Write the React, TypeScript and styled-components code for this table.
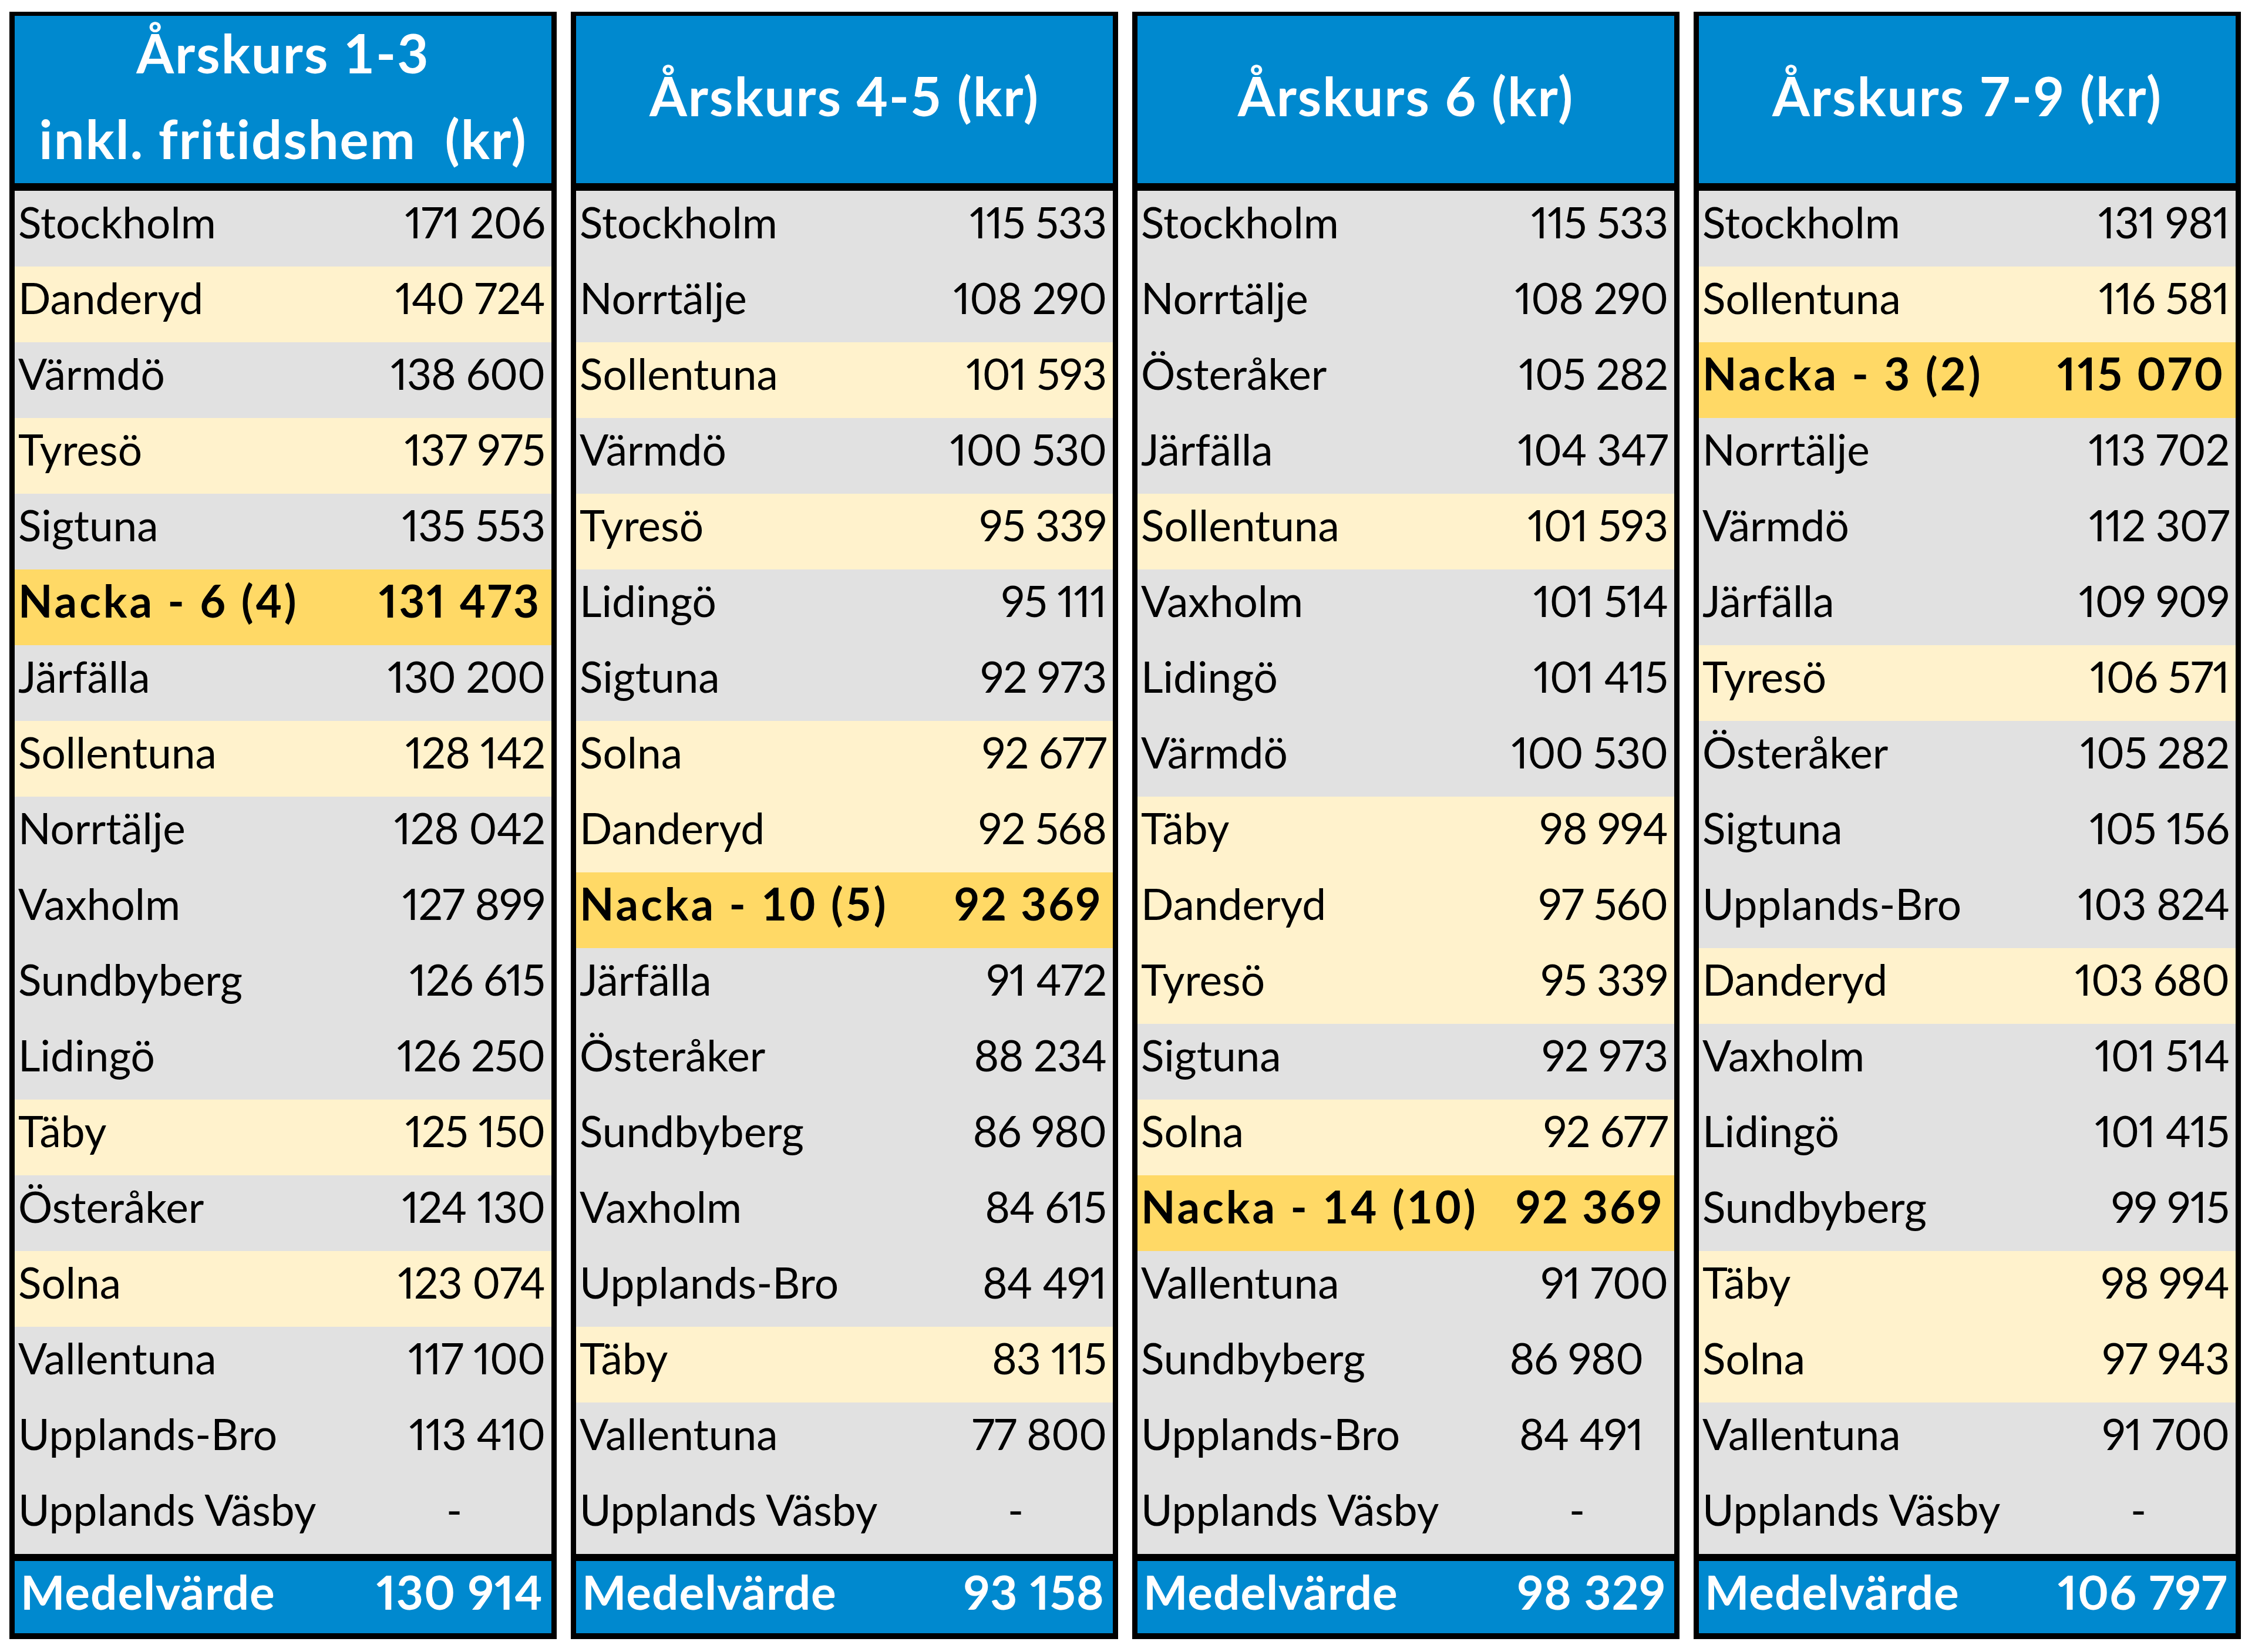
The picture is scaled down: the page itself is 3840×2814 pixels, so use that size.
import React from "react";
import styled, { createGlobalStyle } from "styled-components";

const GlobalStyle = createGlobalStyle`
  html, body {
    margin: 0;
    padding: 0;
    background: #ffffff;
  }
  body {
    font-family: Lato, "Open Sans", "Liberation Sans", sans-serif;
    color: #000000;
  }
`;

type Tone = "gray" | "yellow" | "gold";

type Entry = {
  name: string;
  value: string;
  tone?: Tone;
  inset?: number;
};

type Column = {
  title: string[];
  rows: Entry[];
  mean: string;
};

const DASH_INSET = 142;

const columns: Column[] = [
  {
    title: ["Årskurs 1-3", "inkl. fritidshem\u00a0\u00a0(kr)"],
    mean: "130 914",
    rows: [
      { name: "Stockholm", value: "171 206" },
      { name: "Danderyd", value: "140 724", tone: "yellow" },
      { name: "Värmdö", value: "138 600" },
      { name: "Tyresö", value: "137 975", tone: "yellow" },
      { name: "Sigtuna", value: "135 553" },
      { name: "Nacka - 6 (4)", value: "131 473", tone: "gold" },
      { name: "Järfälla", value: "130 200" },
      { name: "Sollentuna", value: "128 142", tone: "yellow" },
      { name: "Norrtälje", value: "128 042" },
      { name: "Vaxholm", value: "127 899" },
      { name: "Sundbyberg", value: "126 615" },
      { name: "Lidingö", value: "126 250" },
      { name: "Täby", value: "125 150", tone: "yellow" },
      { name: "Österåker", value: "124 130" },
      { name: "Solna", value: "123 074", tone: "yellow" },
      { name: "Vallentuna", value: "117 100" },
      { name: "Upplands-Bro", value: "113 410" },
      { name: "Upplands Väsby", value: "-", inset: DASH_INSET },
    ],
  },
  {
    title: ["Årskurs 4-5 (kr)"],
    mean: "93 158",
    rows: [
      { name: "Stockholm", value: "115 533" },
      { name: "Norrtälje", value: "108 290" },
      { name: "Sollentuna", value: "101 593", tone: "yellow" },
      { name: "Värmdö", value: "100 530" },
      { name: "Tyresö", value: "95 339", tone: "yellow" },
      { name: "Lidingö", value: "95 111" },
      { name: "Sigtuna", value: "92 973" },
      { name: "Solna", value: "92 677", tone: "yellow" },
      { name: "Danderyd", value: "92 568", tone: "yellow" },
      { name: "Nacka - 10 (5)", value: "92 369", tone: "gold" },
      { name: "Järfälla", value: "91 472" },
      { name: "Österåker", value: "88 234" },
      { name: "Sundbyberg", value: "86 980" },
      { name: "Vaxholm", value: "84 615" },
      { name: "Upplands-Bro", value: "84 491" },
      { name: "Täby", value: "83 115", tone: "yellow" },
      { name: "Vallentuna", value: "77 800" },
      { name: "Upplands Väsby", value: "-", inset: DASH_INSET },
    ],
  },
  {
    title: ["Årskurs 6 (kr)"],
    mean: "98 329",
    rows: [
      { name: "Stockholm", value: "115 533" },
      { name: "Norrtälje", value: "108 290" },
      { name: "Österåker", value: "105 282" },
      { name: "Järfälla", value: "104 347" },
      { name: "Sollentuna", value: "101 593", tone: "yellow" },
      { name: "Vaxholm", value: "101 514" },
      { name: "Lidingö", value: "101 415" },
      { name: "Värmdö", value: "100 530" },
      { name: "Täby", value: "98 994", tone: "yellow" },
      { name: "Danderyd", value: "97 560", tone: "yellow" },
      { name: "Tyresö", value: "95 339", tone: "yellow" },
      { name: "Sigtuna", value: "92 973" },
      { name: "Solna", value: "92 677", tone: "yellow" },
      { name: "Nacka - 14 (10)", value: "92 369", tone: "gold" },
      { name: "Vallentuna", value: "91 700" },
      { name: "Sundbyberg", value: "86 980", inset: 42 },
      { name: "Upplands-Bro", value: "84 491", inset: 42 },
      { name: "Upplands Väsby", value: "-", inset: DASH_INSET },
    ],
  },
  {
    title: ["Årskurs 7-9 (kr)"],
    mean: "106 797",
    rows: [
      { name: "Stockholm", value: "131 981" },
      { name: "Sollentuna", value: "116 581", tone: "yellow" },
      { name: "Nacka - 3 (2)", value: "115 070", tone: "gold" },
      { name: "Norrtälje", value: "113 702" },
      { name: "Värmdö", value: "112 307" },
      { name: "Järfälla", value: "109 909" },
      { name: "Tyresö", value: "106 571", tone: "yellow" },
      { name: "Österåker", value: "105 282" },
      { name: "Sigtuna", value: "105 156" },
      { name: "Upplands-Bro", value: "103 824" },
      { name: "Danderyd", value: "103 680", tone: "yellow" },
      { name: "Vaxholm", value: "101 514" },
      { name: "Lidingö", value: "101 415" },
      { name: "Sundbyberg", value: "99 915" },
      { name: "Täby", value: "98 994", tone: "yellow" },
      { name: "Solna", value: "97 943", tone: "yellow" },
      { name: "Vallentuna", value: "91 700" },
      { name: "Upplands Väsby", value: "-", inset: DASH_INSET },
    ],
  },
];

const toneColor: Record<Tone, string> = {
  gray: "#e1e1e1",
  yellow: "#fff2cc",
  gold: "#ffd966",
};

const BLUE = "#0089cf";

const Page = styled.div`
  width: 3840px;
  height: 2814px;
  box-sizing: border-box;
  padding: 20px 24px 0 16px;
  display: flex;
  gap: 24px;
  align-items: flex-start;
`;

const Panel = styled.section`
  width: 932px;
  box-sizing: border-box;
  border: 9px solid #000;
  border-top-width: 7px;
  border-bottom-width: 10px;
  display: flex;
  flex-direction: column;
`;

const Header = styled.header`
  height: 298px;
  box-sizing: border-box;
  background: ${BLUE};
  border-bottom: 13px solid #000;
  color: #fff;
  display: flex;
  flex-direction: column;
  align-items: center;
  justify-content: center;
  padding-bottom: 14px;
  font-weight: 700;
  font-size: 92px;
  letter-spacing: 2px;
  text-align: center;
`;

const HeaderLine = styled.div<{ $tall: boolean }>`
  line-height: ${(p) => (p.$tall ? "146px" : "normal")};
  white-space: nowrap;
`;

const Body = styled.div`
  display: flex;
  flex-direction: column;
`;

const Row = styled.div<{ $tone: Tone }>`
  height: 129px;
  box-sizing: border-box;
  background: ${(p) => toneColor[p.$tone]};
  display: flex;
  align-items: center;
  justify-content: space-between;
  padding: 0 ${(p) => (p.$tone === "gold" ? "18px" : "11px")} 24px 6px;
  font-size: ${(p) => (p.$tone === "gold" ? "76px" : "73px")};
  font-weight: ${(p) => (p.$tone === "gold" ? 700 : 400)};
  white-space: nowrap;
`;

const Name = styled.span<{ $strong: boolean }>`
  letter-spacing: ${(p) => (p.$strong ? "4px" : "0")};
`;

const Amount = styled.span<{ $inset: number; $strong: boolean }>`
  margin-right: ${(p) => p.$inset}px;
  font-variant-numeric: proportional-nums;
  letter-spacing: ${(p) => (p.$strong ? "3px" : "-1px")};
`;

const Footer = styled.footer`
  height: 135px;
  box-sizing: border-box;
  background: ${BLUE};
  border-top: 12px solid #000;
  color: #fff;
  display: flex;
  align-items: center;
  justify-content: space-between;
  padding: 0 14px 20px 10px;
  font-size: 80px;
  font-weight: 700;
  letter-spacing: 1px;
  white-space: nowrap;
`;

const FooterLabel = styled.span``;

const FooterValue = styled.span`
  font-variant-numeric: proportional-nums;
`;

export default function App() {
  return (
    <>
      <GlobalStyle />
      <Page>
        {columns.map((col, i) => (
          <Panel key={i}>
            <Header>
              {col.title.map((t, j) => (
                <HeaderLine key={j} $tall={col.title.length > 1}>
                  {t}
                </HeaderLine>
              ))}
            </Header>
            <Body>
              {col.rows.map((r, k) => {
                const tone = r.tone ?? "gray";
                const strong = tone === "gold";
                return (
                  <Row key={k} $tone={tone}>
                    <Name $strong={strong}>{r.name}</Name>
                    <Amount $inset={r.inset ?? 0} $strong={strong}>
                      {r.value}
                    </Amount>
                  </Row>
                );
              })}
            </Body>
            <Footer>
              <FooterLabel>Medelvärde</FooterLabel>
              <FooterValue>{col.mean}</FooterValue>
            </Footer>
          </Panel>
        ))}
      </Page>
    </>
  );
}
